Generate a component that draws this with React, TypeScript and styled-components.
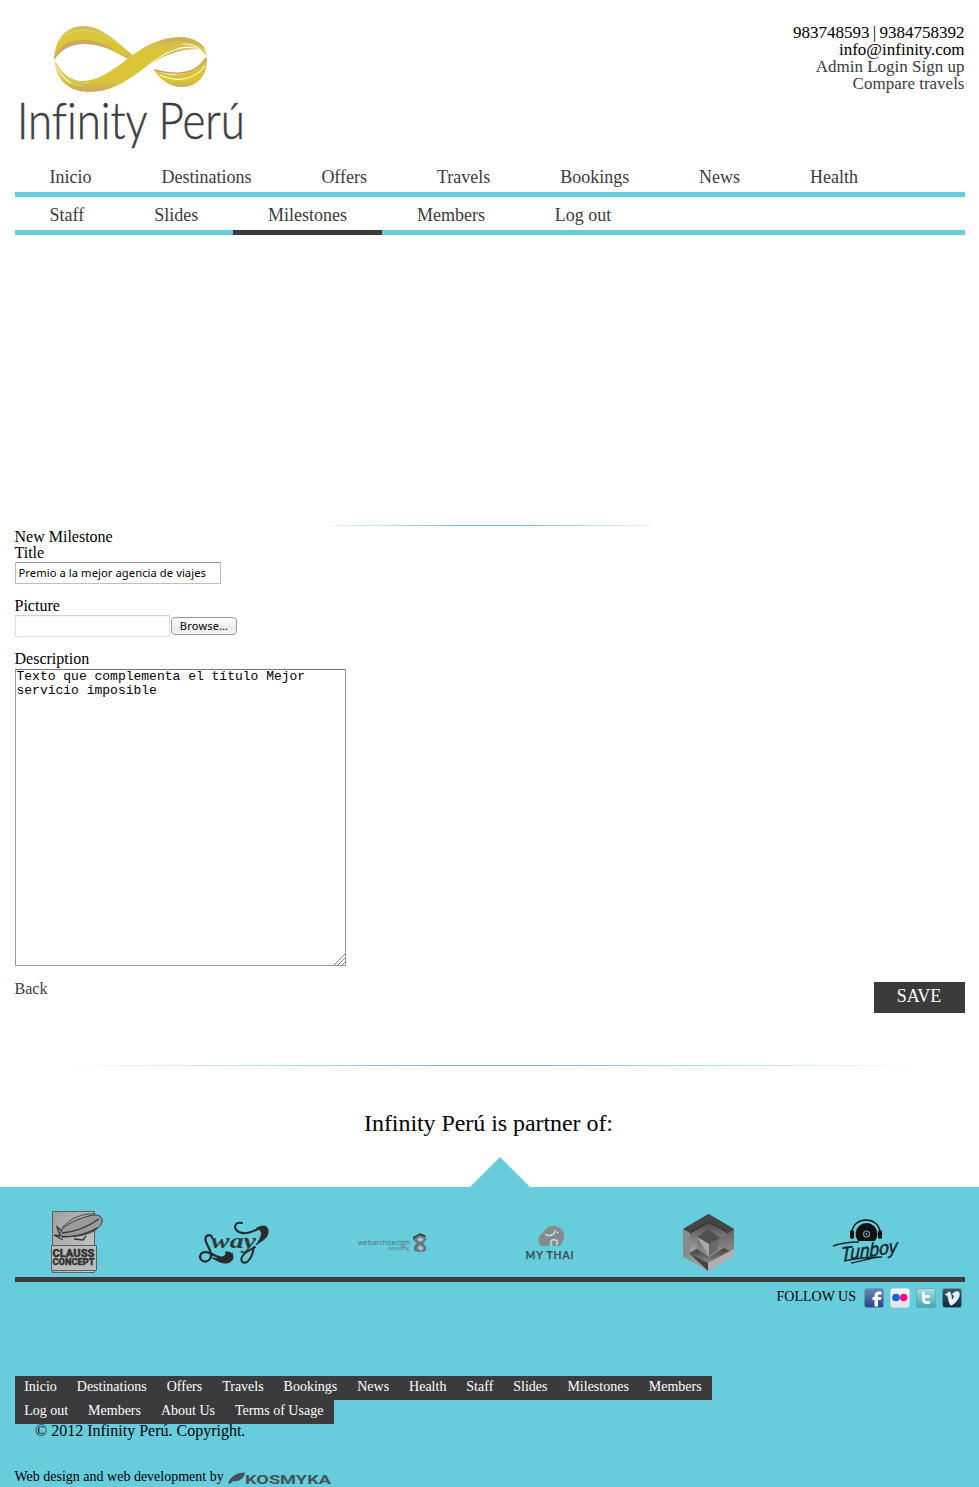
import React from "react";
import styled, { createGlobalStyle } from "styled-components";

const aqua = "#67cddc";
const dark = "#3b3b3d";

const GlobalStyle = createGlobalStyle`
  * { box-sizing: border-box; }
  body { margin: 0; background: #fff; color: #000; font-family: "Liberation Serif", "Times New Roman", serif; font-size: 16px; line-height: 16px; }
  a { color: inherit; text-decoration: none; }
  svg { overflow: visible; }
`;

const Page = styled.div`
  width: 979px;
  height: 1487px;
  display: flex;
  flex-direction: column;
  overflow: hidden;
`;
const Header = styled.header`
  height: 159px;
  padding: 24px 14.5px 0 15px;
  display: flex;
  justify-content: space-between;
`;
const Contact = styled.div`
  font-size: 17px;
  line-height: 17px;
  text-align: right;
`;
const ContactLine = styled.div<{ $muted?: boolean; $tight?: boolean }>`
  color: ${(p) => (p.$muted ? dark : "#000")};
  word-spacing: ${(p) => (p.$tight ? "-1px" : "0")};
`;
const Nav = styled.nav`
  margin: 0 14px 0 15px;
  height: 38px;
  display: flex;
  border-bottom: 5px solid ${aqua};
`;
const NavItem = styled.a<{ $active?: boolean }>`
  height: 38px;
  padding: 9px 35.3px 0 34.6px;
  font-size: 18px;
  line-height: 18px;
  color: ${dark};
  border-bottom: 5px solid ${(p) => (p.$active ? dark : "transparent")};
`;
const Rule = styled.hr<{ $width: number }>`
  width: ${(p) => p.$width}px;
  height: 1px;
  border: 0;
  margin: 0 auto;
  flex: none;
  background: linear-gradient(to right, #e9f7f7, #a9dfe2 22%, #63c0d6 42%, #63c0d6 58%, #a9dfe2 78%, #eef6fb);
`;
const WideRule = styled(Rule)`
  background: linear-gradient(to right, #fff, #b5e3e5 24%, #63c0d6 45%, #63c0d6 55%, #b5e3e5 76%, #fff);
`;
const Slideshow = styled.section`
  height: 290px;
`;
const Form = styled.form`
  margin: 3px 14px 0 15px;
  height: 536px;
  display: flex;
  flex-direction: column;
`;
const FormText = styled.div`
  line-height: 16px;
  flex: none;
  margin-left: -0.5px;
`;
const Field = styled.label`
  display: flex;
  flex-direction: column;
  align-items: flex-start;
  margin-bottom: 14px;
`;
const TextInput = styled.input`
  width: 206px;
  height: 22px;
  margin-top: 1px;
  padding: 0 2.5px 1px;
  border: 1px solid #bfbfbf;
  border-top-color: #9f9f9f;
  box-shadow: inset 0 1px 1px #eee;
  font: 11.2px "Noto Sans", sans-serif;
  letter-spacing: 0.07px;
  border-radius: 0;
`;
const FileRow = styled.div`
  margin-top: 1px;
  display: flex;
  align-items: center;
  gap: 1px;
`;
const FileBox = styled.div`
  width: 155px;
  height: 22px;
  border: 1px solid #dedede;
  border-top-color: #cfcfcf;
  box-shadow: inset 0 1px 1px #f3f3f3;
`;
const Browse = styled.button`
  width: 66px;
  height: 18px;
  padding: 0;
  border: 1px solid #9b9b9b;
  border-radius: 4px;
  background: linear-gradient(#fff, #f3f3f3 50%, #e9e9e9 51%, #f4f4f4);
  font: 11px/14px "Noto Sans", sans-serif;
  letter-spacing: 0.25px;
  color: #000;
`;
const TextArea = styled.textarea`
  width: 331px;
  height: 297px;
  margin-top: 2px;
  padding: 0 0 0 0.5px;
  border: 1px solid #9a9a9a;
  border-top-color: #777;
  font: 13px/14px "Liberation Mono", monospace;
  resize: none;
`;
const AreaWrap = styled.div`
  position: relative;
  display: flex;
`;
const Grip = styled.svg`
  position: absolute;
  right: 1px;
  bottom: 1px;
`;
const Actions = styled.div`
  display: flex;
  justify-content: space-between;
`;
const Back = styled.a`
  color: ${dark};
  padding-top: 1px;
  margin-left: -0.5px;
`;
const Save = styled.button`
  width: 91px;
  height: 31px;
  margin-top: 2px;
  padding: 0 1px 2px 0;
  border: 0;
  background: ${dark};
  color: #fff;
  font: 18px "Liberation Serif", serif;
`;
const Partners = styled.h2`
  margin: 43px 2px 0 0;
  height: 48px;
  font-size: 24px;
  font-weight: 400;
  line-height: 28px;
  letter-spacing: -0.06px;
  text-align: center;
`;
const Arrow = styled.div`
  align-self: center;
  margin-left: 20px;
  border: 30px solid transparent;
  border-top: 0;
  border-bottom-color: ${aqua};
`;
const Footer = styled.footer`
  flex: 1;
  background: ${aqua};
  padding: 0 14px 0 15px;
`;
const Logos = styled.div`
  height: 95px;
  border-bottom: 5px solid ${dark};
  display: flex;
`;
const Follow = styled.div`
  height: 94px;
  padding: 6px 3px 0 0;
  display: flex;
  justify-content: flex-end;
  align-items: flex-start;
  font-size: 14px;
  gap: 6px;
`;
const FollowLabel = styled.span`
  margin-right: 2px;
  padding-top: 1px;
`;
const FooterNav = styled.nav`
  display: flex;
  flex-direction: column;
  align-items: flex-start;
`;
const FooterRow = styled.div<{ $width: number }>`
  width: ${(p) => p.$width}px;
  height: 24px;
  padding: 3px 0 0 9.2px;
  display: flex;
  gap: 19.95px;
  font-size: 14px;
  color: #fff;
  background: ${dark};
  white-space: nowrap;
`;
const Copyright = styled.div`
  height: 16px;
  padding-left: 20px;
  line-height: 14px;
`;
const Credit = styled.div`
  height: 18px;
  margin-top: 29px;
  margin-left: -0.5px;
  display: flex;
  font-size: 14px;
  gap: 4px;
  align-items: flex-start;
`;
const Wordmark = styled.text`
  font-family: Lato, sans-serif;
  font-weight: 300;
  font-size: 52px;
  font-variant-ligatures: none;
  fill: #3e3e40;
  stroke: #3e3e40;
  stroke-width: 0.5px;
`;

const BrandLogo = () => (
  <svg width="235" height="134" viewBox="15 24 235 134">
    <defs>
      <linearGradient id="gold" x1="0" y1="0" x2="0" y2="1">
        <stop offset="0" stopColor="#d0bb58" />
        <stop offset=".3" stopColor="#dbc637" />
        <stop offset=".8" stopColor="#d9c437" />
        <stop offset="1" stopColor="#c9a764" />
      </linearGradient>
    </defs>
    <path d="M54 60C55 38 67 26 83 26c20 0 34 17 50 29l-5 4c-15-8-27-15-44-15-14 0-24 6-30 16Z" fill="url(#gold)" />
    <path d="M54 60c3-14 15-20 30-20 14 0 24 6 36 13-12-5-22-9-36-9-14 0-23 6-30 16Z" fill="#cda766" />
    <path d="M59 42C72 24 96 29 112 41" fill="none" stroke="#ddcf62" strokeWidth="1.5" />
    <path d="M55 61c8 14 15 20 27 20C100 81 115 68 130 57 145 46 160 37 180 37c16 0 24 8 27 19-8-9-18-12-31-7C150 56 128 92 89 92 69 92 56 80 55 61Z" fill="url(#gold)" />
    <path d="M158 43c18-8 38-9 49 8-9-9-21-11-35-10-10 1-18 4-26 7Z" fill="#cfae58" />
    <path d="M153 63c12-10 27-18 45-14-14 0-30 4-45 14Z" fill="#cfc35c" />
    <path d="M56 66c8 12 19 17 33 17M58 73c7 9 15 12 25 13" fill="none" stroke="#d3ca69" strokeWidth="2" />
    <path d="M56 66c4 9 9 13 15 17" fill="none" stroke="#fff5ac" strokeWidth="1.2" />
    <path d="M207 57c1 18-9 30-25 30-13 0-21-7-28-17 9 4 18 6 27 4 13-2 20-7 26-17Z" fill="url(#gold)" />
    <path d="M154 70c9 2 15 4 26 3 13-1 20-6 26-15" fill="none" stroke="#c9a461" strokeWidth="1.6" />
    <path d="M160 75c17 8 34 5 45-9M183 44c11 0 19 5 23 13" fill="none" stroke="#fffabb" strokeWidth="1.2" />
    <Wordmark x="17" y="139" textLength="228" lengthAdjust="spacingAndGlyphs">Infinity Perú</Wordmark>
  </svg>
);

const PartnerLogos = () => (
  <svg width="950" height="90" viewBox="15 1187 950 90">
    <defs>
      <linearGradient id="steel" x1="0" y1="0" x2="0" y2="1">
        <stop offset="0" stopColor="#4a4a4a" />
        <stop offset="1" stopColor="#aaa" />
      </linearGradient>
      <linearGradient id="plate" x1="0" y1="0" x2="1" y2="1">
        <stop offset="0" stopColor="#a0a0a0" />
        <stop offset="1" stopColor="#ccc" />
      </linearGradient>
      <linearGradient id="facet" x1="0" y1="0" x2="0" y2="1">
        <stop offset="0" stopColor="#3d3d3d" />
        <stop offset="1" stopColor="#8a8a8a" />
      </linearGradient>
    </defs>
    <g stroke="#5b6062">
      <path d="M52.5 1211.5h42v61h-42z" fill="url(#plate)" />
      <path d="M51.5 1245.5h45v25h-45z" fill="#b9bcbd" />
      <path d="M60 1236c-2-9 18-18 33-21 10-1 12 7 5 13-7 6-20 10-38 8Z" fill="#9a9a9a" stroke="#333" />
      <path d="M60 1236l-3-9 5 4M60 1236l-6-1 9 5M62 1233c13-1 27-7 37-14M62 1237c13 0 25-3 35-9M74 1239l9 1 3-4" fill="none" stroke="#333" strokeWidth="1.3" />
      <path d="M62 1228c8-10 21-15 33-14" fill="none" stroke="#444" />
    </g>
    <g fontFamily="Roboto" fontWeight="900" fill="#303030" stroke="#303030" strokeWidth=".3">
      <text x="52.5" y="1257" fontSize="10" textLength="42" lengthAdjust="spacingAndGlyphs">CLAUSS</text>
      <text x="52.5" y="1265" fontSize="8.2" textLength="42" lengthAdjust="spacingAndGlyphs">CONCEPT</text>
    </g>
    <g fill="none" stroke="#242b2d" strokeLinecap="round">
      <path d="M212 1237c-3-4-8-1-6 5 3 7 8 13 3 18-5 4-11-1-8-6 3-4 9-1 15 2 7 3 13 4 16-2" strokeWidth="2.2" />
      <path d="M226 1252c8-1 9 7 4 10-6 3-12-1-18-4 8 1 15-1 14-6Z" fill="#242b2d" />
      <path d="M242 1223c-8-2-9 6-3 9 9 4 17-3 24-5M254 1247c-1 6-3 12-7 15-4 2-7-1-5-5 2-5 9-7 13-10" strokeWidth="2" />
      <path d="M257 1228c7-4 12-2 11 5-1 6-7 8-12 12 6-8 8-14 1-17Z" fill="#242b2d" />
    </g>
    <text x="211" y="1248" fontFamily="Liberation Serif" fontStyle="italic" fontWeight="700" fontSize="20" fill="#303a3d" textLength="45" lengthAdjust="spacingAndGlyphs">way</text>
    <text x="358" y="1245" fontFamily="Open Sans" fontSize="7" fill="#566e75" textLength="52" lengthAdjust="spacingAndGlyphs">webarchitectgn</text>
    <text x="389" y="1250" fontFamily="Open Sans" fontSize="5" fill="#5f747a" textLength="20" lengthAdjust="spacingAndGlyphs">branding</text>
    <path d="M413 1237l7-3 6 2v4l-3 3 3 4v4l-5 1-7-1v-5l3-3-4-3Z" fill="#63777d" />
    <path d="M417 1239l3-2 4 2-3 3-3-1ZM417 1248l3-3 4 3-3 3Z" fill="#9fc5cc" />
    <path d="M413 1238l7-4 5 2" fill="none" stroke="#333" strokeWidth="1.4" />
    <path d="M541 1246c-4-5-3-11 3-14 1-4 6-7 11-6 8 1 11 8 8 15-1 3-3 4-3 5h-7l-1-2h-2l-1 2Z" fill="#868b8d" />
    <path d="M545 1234c4 3 10 1 10-4M552 1245c-3-2-1-6 3-5 3 0 3 3 1 5" fill="none" stroke="#c1e8ee" strokeWidth="1.4" />
    <circle cx="557.5" cy="1232.5" r="1" fill="#c6eef3" />
    <text x="525.5" y="1259" fontFamily="Lato" fontWeight="600" fontSize="10.5" fill="#384b50" stroke="#384b50" strokeWidth=".25" textLength="48">MY THAI</text>
    <path d="M708.5 1214l25.500 15v27l-26 15-25-14v-28Z" fill="url(#steel)" />
    <path d="M683 1229l25.500-15 25.500 15-5 4-20-11-19 11Z" fill="#454545" />
    <path d="M690 1233l19-11 19 11-6 4-13-8-12 8v11l-7 5Z" fill="url(#steel)" />
    <path d="M683 1229l7 4v20l-7 4Z" fill="#8a8a8a" />
    <path d="M690 1233l19-11 19 11" fill="none" stroke="#292929" />
    <path d="M697 1237l11-8 12 9-11 6Z" fill="#505050" />
    <path d="M697 1237l12 7v12Z" fill="#aaa" />
    <path d="M709 1244l11-6-3 12-8 6Z" fill="#686868" />
    <path d="M689 1253l8-4 12 8 15-9 6 3-22 12Z" fill="url(#facet)" />
    <path d="M689 1253l19 10v8Z" fill="#444" />
    <path d="M708 1263l26-14v7l-26 15Z" fill="#b0b0b0" />
    <path d="M852 1232c1-8 7-12 14-12s13 4 14 12" fill="none" stroke="#111" strokeWidth="1.3" />
    <path d="M858 1241a11 11 0 1 1 17 0Z" fill="#111" />
    <circle cx="866.5" cy="1234" r="3.5" fill="#62a9b4" />
    <circle cx="866.5" cy="1234" r="2.4" fill="#111" />
    <circle cx="866.5" cy="1234" r=".8" fill="#cef" />
    <rect x="850" y="1230" width="4" height="9" rx="2" fill="#111" />
    <rect x="878" y="1230" width="4" height="9" rx="2" fill="#111" />
    <g transform="rotate(-8 867 1254) skewX(-8)" fontFamily="Liberation Sans" fontStyle="italic" fontWeight="400" fill="#17282c" stroke="#17282c" strokeWidth=".5">
      <text x="1017" y="1257" fontSize="19" textLength="57" lengthAdjust="spacingAndGlyphs">Tunboy</text>
    </g>
    <path d="M833 1246c8-3 15-4 26-4M844 1261c14-3 27-4 38-4-11 0-22 5-31 6" fill="none" stroke="#17282c" strokeWidth="1.4" />
  </svg>
);

const socialShades: Record<string, [string, string]> = {
  fb: ["#6e88b9", "#234587"],
  fl: ["#f5f5f5", "#e1e3e7"],
  tw: ["#a5e1e4", "#42a6ad"],
  vm: ["#345f77", "#13293b"],
};

const SocialIcon = ({ kind }: { kind: string }) => (
  <svg width="20" height="20" viewBox="0 0 20 20">
    <defs>
      <linearGradient id={kind} x1="0" y1="0" x2="0" y2="1">
        <stop stopColor={socialShades[kind][0]} />
        <stop offset="1" stopColor={socialShades[kind][1]} />
      </linearGradient>
    </defs>
    <rect x=".5" y=".5" width="19" height="19" rx="2.5" fill={`url(#${kind})`} stroke={kind === "fl" ? "#c8dce1" : "#5898aa"} strokeWidth=".6" />
    {kind === "fb" && <path d="M10.5 18.5V12H8.5V9h2V7.5c0-4 3-4.500 7-3.800v3c-2.500-.5-3.500-.2-3.500 1.300v1h3.500l-.5 3h-3v6.500Z" fill="#fff" />}
    {kind === "fl" && <><circle cx="6" cy="9.5" r="3.8" fill="#0865dc" /><circle cx="13.7" cy="9.5" r="3.8" fill="#ff0a84" /></>}
    {kind === "tw" && <path d="M7.5 5v6.500q0 3 3 3h2.500M7.500 8.500h5" fill="none" stroke="#fff" strokeWidth="2.8" strokeLinecap="round" />}
    {kind === "vm" && <path d="M2.500 7l4.500-3.500q2.500 0 3 8c2.500-2 2.500-5 0-4.500 2-5 9-5 7.500 1-1 4-5 8-8 9.500-3 0-3-8-4.500-10Z" fill="#e8f0f3" />}
  </svg>
);

const KosmykaLogo = () => (
  <svg width="105" height="18" viewBox="0 0 105 18">
    <path d="M0 14C3 7 10 3 17 3.500c-1 7-7 9.500-12 8.500l-3 3Z" fill="#435358" />
    <text x="17" y="14.5" fontFamily="Roboto" fontWeight="700" fontSize="13.5" fill="#435358" textLength="86" lengthAdjust="spacingAndGlyphs">KOSMYKA</text>
  </svg>
);

const mainLinks = ["Inicio", "Destinations", "Offers", "Travels", "Bookings", "News", "Health"];
const adminLinks = ["Staff", "Slides", "Milestones", "Members", "Log out"];

export default function App() {
  return (
    <Page>
      <GlobalStyle />
      <Header>
        <BrandLogo />
        <Contact>
          <ContactLine $tight>983748593 | 9384758392</ContactLine>
          <ContactLine>info@infinity.com</ContactLine>
          <ContactLine $muted>Admin Login Sign up</ContactLine>
          <ContactLine $muted>Compare travels</ContactLine>
        </Contact>
      </Header>
      <Nav>{mainLinks.map((l) => <NavItem key={l}>{l}</NavItem>)}</Nav>
      <Nav>{adminLinks.map((l) => <NavItem key={l} $active={l === "Milestones"}>{l}</NavItem>)}</Nav>
      <Slideshow />
      <Rule $width={320} />
      <Form>
        <FormText>New Milestone</FormText>
        <Field>
          <FormText>Title</FormText>
          <TextInput defaultValue="Premio a la mejor agencia de viajes" />
        </Field>
        <Field>
          <FormText>Picture</FormText>
          <FileRow>
            <FileBox />
            <Browse type="button">Browse…</Browse>
          </FileRow>
        </Field>
        <Field>
          <FormText>Description</FormText>
          <AreaWrap>
            <TextArea defaultValue="Texto que complementa el título Mejor servicio imposible" />
            <Grip width="11" height="11"><path d="M0 11L11 0M4 11l7-7M8 11l3-3" stroke="#888" /></Grip>
          </AreaWrap>
        </Field>
        <Actions>
          <Back>Back</Back>
          <Save type="button">SAVE</Save>
        </Actions>
      </Form>
      <WideRule $width={860} />
      <Partners>Infinity Perú is partner of:</Partners>
      <Arrow />
      <Footer>
        <Logos><PartnerLogos /></Logos>
        <Follow>
          <FollowLabel>FOLLOW US</FollowLabel>
          {["fb", "fl", "tw", "vm"].map((k) => <SocialIcon key={k} kind={k} />)}
        </Follow>
        <FooterNav>
          <FooterRow $width={697}>
            {[...mainLinks, ...adminLinks.slice(0, 4)].map((l) => <a key={l}>{l}</a>)}
          </FooterRow>
          <FooterRow $width={319}>
            {["Log out", "Members", "About Us", "Terms of Usage"].map((l) => <a key={l}>{l}</a>)}
          </FooterRow>
        </FooterNav>
        <Copyright>© 2012 Infinity Perú. Copyright.</Copyright>
        <Credit>Web design and web development by <KosmykaLogo /></Credit>
      </Footer>
    </Page>
  );
}
